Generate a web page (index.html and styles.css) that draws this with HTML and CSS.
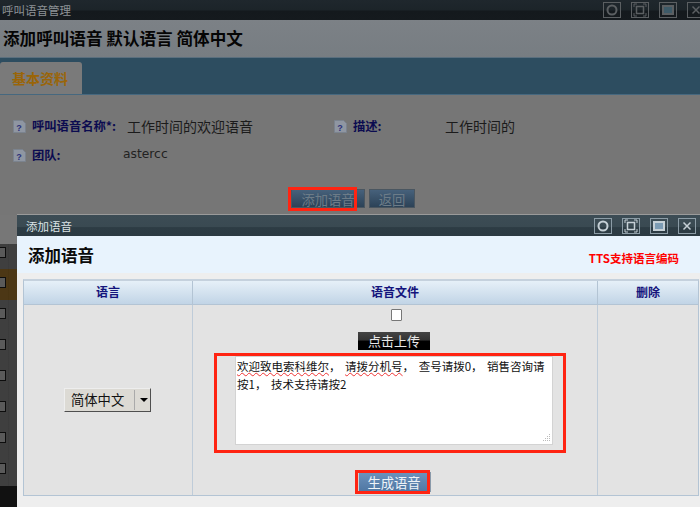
FILE: index.html
```html
<!DOCTYPE html>
<html lang="zh">
<head>
<meta charset="utf-8">
<title>呼叫语音管理</title>
<link rel="stylesheet" href="styles.css">
</head>
<body>
<div class="desk">
  <section class="win">
    <header class="win-bar">
      <span class="win-title">呼叫语音管理</span>
      <div class="win-tools dim">
        <svg class="tool" viewBox="0 0 18 16"><rect x=".5" y=".5" width="17" height="15" fill="none" stroke="currentColor"/><circle cx="9" cy="8" r="4.500" fill="none" stroke="currentColor" stroke-width="2"/></svg>
        <svg class="tool" viewBox="0 0 18 16"><rect x=".5" y=".5" width="17" height="15" fill="none" stroke="currentColor"/><rect x="5.500" y="4.500" width="7" height="7" fill="none" stroke="currentColor" stroke-width="1.500"/><path d="M3 5V2h3M12 2h3v3M15 11v3h-3M6 14H3v-3" fill="none" stroke="currentColor"/></svg>
        <svg class="tool" viewBox="0 0 18 16"><rect x=".5" y=".5" width="17" height="15" fill="none" stroke="currentColor"/><rect x="4" y="4" width="10" height="8" fill="#3d5a68" stroke="currentColor" stroke-width="2"/></svg>
        <svg class="tool" viewBox="0 0 18 16"><rect x=".5" y=".5" width="17" height="15" fill="none" stroke="currentColor"/><path d="M5.500 4.500l7 7M12.500 4.500l-7 7" stroke="currentColor" stroke-width="1.500"/></svg>
      </div>
    </header>
    <h1 class="page-head">添加呼叫语音 默认语言 简体中文</h1>
    <nav class="tabs"><span class="tab">基本资料</span></nav>
    <div class="form">
      <div class="form-row">
        <span class="field field-name">
          <svg class="help" viewBox="0 0 13 13"><path d="M.5.5h9l3 3v9H.5z" fill="#8f96a2" stroke="#7b838e"/><text x="6" y="10.500" class="help-q">?</text></svg>
          <b class="lbl lbl-name">呼叫语音名称*:</b><span class="val">工作时间的欢迎语音</span>
        </span>
        <span class="field field-desc">
          <svg class="help" viewBox="0 0 13 13"><path d="M.5.5h9l3 3v9H.5z" fill="#8f96a2" stroke="#7b838e"/><text x="6" y="10.500" class="help-q">?</text></svg>
          <b class="lbl lbl-desc">描述:</b><span class="val">工作时间的</span>
        </span>
      </div>
      <div class="form-row row-team">
        <span class="field">
          <svg class="help" viewBox="0 0 13 13"><path d="M.5.5h9l3 3v9H.5z" fill="#8f96a2" stroke="#7b838e"/><text x="6" y="10.500" class="help-q">?</text></svg>
          <b class="lbl lbl-team">团队:</b><span class="val val-latin">astercc</span>
        </span>
      </div>
      <div class="actions">
        <span class="marked marked-add"><button class="btn btn-dim btn-add">添加语音</button></span>
        <button class="btn btn-dim btn-back">返回</button>
      </div>
    </div>
    <div class="under-list">
      <div class="under-row under-first"><i class="under-box"></i></div>
      <div class="under-row under-hot"><i class="under-box"></i></div>
      <div class="under-row"><i class="under-box"></i></div>
      <div class="under-row"><i class="under-box"></i></div>
      <div class="under-row"><i class="under-box"></i></div>
      <div class="under-row"><i class="under-box"></i></div>
      <div class="under-row"><i class="under-box"></i></div>
      <div class="under-row"><i class="under-box"></i></div>
    </div>
  </section>

  <section class="dialog">
    <header class="dlg-bar">
      <span class="dlg-title">添加语音</span>
      <div class="win-tools">
        <svg class="tool" viewBox="0 0 18 16"><rect x=".5" y=".5" width="17" height="15" fill="none" stroke="#8c9ca6"/><circle cx="9" cy="8" r="4.500" fill="none" stroke="currentColor" stroke-width="2"/></svg>
        <svg class="tool" viewBox="0 0 18 16"><rect x=".5" y=".5" width="17" height="15" fill="none" stroke="#8c9ca6"/><rect x="5.500" y="4.500" width="7" height="7" fill="none" stroke="currentColor" stroke-width="1.500"/><path d="M3 5V2h3M12 2h3v3M15 11v3h-3M6 14H3v-3" fill="none" stroke="currentColor"/></svg>
        <svg class="tool" viewBox="0 0 18 16"><rect x=".5" y=".5" width="17" height="15" fill="none" stroke="#8c9ca6"/><rect x="4" y="4" width="10" height="8" fill="#7d9cb4" stroke="currentColor" stroke-width="2"/></svg>
        <svg class="tool" viewBox="0 0 18 16"><rect x=".5" y=".5" width="17" height="15" fill="none" stroke="#8c9ca6"/><path d="M5.500 4.500l7 7M12.500 4.500l-7 7" stroke="currentColor" stroke-width="1.500"/></svg>
      </div>
    </header>
    <div class="dlg-head">
      <h2 class="dlg-heading">添加语音</h2>
      <span class="tts-note">TTS支持语言编码</span>
    </div>
    <div class="dlg-body">
      <div class="grid">
        <div class="th">语言</div>
        <div class="th">语音文件</div>
        <div class="th">删除</div>
        <div class="td td-lang">
          <span class="select"><span class="select-text">简体中文</span><span class="select-arrow"></span></span>
        </div>
        <div class="td td-file">
          <input class="check" type="checkbox">
          <button class="upload">点击上传</button>
          <div class="marked marked-text">
            <div class="textarea"><span class="spell">欢迎致电索科维尔</span>， <span class="spell">请拨分机号</span>， 查号请拨0， 销售咨询请按1， 技术支持请按2<svg class="grip" viewBox="0 0 10 10"><path d="M8 1h1v1H8zM6 3h1v1H6zM8 3h1v1H8zM4 5h1v1H4zM6 5h1v1H6zM8 5h1v1H8zM2 7h1v1H2zM4 7h1v1H4zM6 7h1v1H6zM8 7h1v1H8z" fill="#bbb"/></svg></div>
          </div>
          <span class="marked marked-gen"><button class="btn btn-gen">生成语音</button></span>
        </div>
        <div class="td"></div>
      </div>
    </div>
  </section>
</div>
</body>
</html>
```

FILE: styles.css
```css
*, *::after { box-sizing: border-box; }
html, body { margin: 0; padding: 0; }
body { width: 700px; height: 507px; overflow: hidden; background: #777; font-family: "Noto Sans CJK SC", "Liberation Sans", sans-serif; }
.desk { position: relative; width: 700px; height: 507px; overflow: hidden; }

/* background window, dimmed */
.win { display: flex; flex-direction: column; height: 507px; background: #777; }
.win-bar { display: flex; align-items: center; justify-content: space-between; height: 20px; flex: none; background: linear-gradient(#1f272d 0, #1c2429 50%, #14191d 55%, #151a1e 100%); }
.win-title { font-size: 11.500px; line-height: 20px; color: #8d9296; padding-left: 2px; }
.win-tools { display: flex; gap: 10px; color: #c6d0d6; }
.win-tools.dim { color: #5b5f62; margin-right: -5px; }
.tool { width: 18px; height: 16px; display: block; }
.page-head { margin: 0; height: 38px; flex: none; padding-left: 3px; font-size: 16.600px; line-height: 37px; font-weight: 700; color: #050505; background: linear-gradient(#7c8186, #777d82); border-bottom: 1px solid #5a6f7e; white-space: nowrap; }
.tabs { display: flex; align-items: flex-end; height: 37px; flex: none; background: #2d4d60; border-bottom: 1px solid #46687f; }
.tab { display: block; width: 82px; height: 32px; padding-left: 12px; font-size: 14px; line-height: 32px; font-weight: 700; color: #9a6508; background: #7a7a7a; border-radius: 3px 3px 0 0; }
.form { height: 120px; flex: none; padding-top: 18px; background: #767676; }
.form-row { display: flex; height: 26px; align-items: center; }
.row-team { margin-top: 3px; }
.field { display: flex; align-items: center; }
.field-name { width: 321px; }
.help { width: 13px; height: 13px; margin-left: 13px; flex: none; }
.help-q { font: 700 9px "Liberation Sans", sans-serif; fill: #2b2f7a; text-anchor: middle; }
.lbl { font-size: 12.300px; color: #0b0b50; margin-left: 6px; white-space: nowrap; }
.lbl-name { width: 90px; }
.lbl-desc { width: 87px; }
.lbl-team { width: 91px; }
.val { font-size: 14px; color: #1b1b1b; margin-left: 5px; white-space: nowrap; }
.val-latin { font-family: "DejaVu Sans", sans-serif; font-size: 12.300px; margin-top: -2px; margin-left: 0; color: #222; }
.actions { display: flex; justify-content: center; gap: 4px; margin-top: 21px; padding-left: 6px; }
.marked { position: relative; display: block; }
.marked::after { content: ""; position: absolute; border: 3px solid #ff2412; pointer-events: none; }
.marked-add::after { left: -3px; top: -2px; width: 69px; height: 24px; }
.marked-text { width: 318px; height: 89px; margin-top: 6px; flex: none; }
.marked-text::after { left: -21px; top: -3px; width: 352px; height: 100px; }
.marked-gen { margin-top: 27px; }
.marked-gen::after { left: -3px; top: -2px; width: 75px; height: 24px; }
.btn { display: block; font: 13.300px/19px "Noto Sans CJK SC", sans-serif; height: 19px; padding: 0; border: 1px solid #4a5660; color: #6d7c88; }
.btn-dim { background: linear-gradient(#46617b, #2c4257); }
.btn-add { width: 74px; }
.btn-back { width: 46px; }
.under-list { position: absolute; left: 0; top: 244px; width: 17px; height: 263px; display: flex; flex-direction: column; background: #111; }
.under-row { height: 31px; padding-top: 8px; background: linear-gradient(90deg, #3f3f3f 8px, #383838 8px, #3f3f3f 9px); }
.under-first { height: 25px; padding-top: 3px; }
.under-hot { background: linear-gradient(90deg, #4c3715 8px, #45320f 8px, #4c3715 9px); }
.under-box { display: block; width: 6px; height: 11px; border: 1px solid #0d0d0d; border-left: 0; background: #5a5a5a; }

/* dialog */
.dialog { position: absolute; left: 17px; top: 214px; width: 683px; height: 293px; background: #eee; border-top: 1px solid #9a9a9a; }
.dlg-bar { display: flex; align-items: center; justify-content: space-between; height: 21px; padding-right: 4px; background: linear-gradient(#3c4c55 0, #3a4a52 55%, #2d3c44 60%, #2c3a42 100%); }
.dlg-title { font-size: 11.500px; color: #dce3e6; padding-left: 9px; }
.dlg-head { display: flex; justify-content: space-between; align-items: center; height: 37px; background: #e8f3fd; padding: 0 20px 0 11px; }
.dlg-heading { margin: 0; font-size: 16.500px; line-height: 38px; font-weight: 700; color: #0a0a0a; }
.tts-note { font-size: 11.500px; font-weight: 700; color: #f00; margin-top: 6px; margin-right: 1px; white-space: nowrap; }
.dlg-body { padding: 6px 2px 0 6px; }
.grid { display: grid; grid-template-columns: 169px 405px 100px; grid-template-rows: 24px 190px; width: 676px; border: 1px solid #b3c4d4; border-top-width: 2px; border-top-color: #c5d1dd; }
.th { display: flex; align-items: center; justify-content: center; padding-bottom: 2px; font-size: 12px; font-weight: 700; color: #14147c; background: linear-gradient(#e6f0f8, #c1d4e6); border-right: 1px solid #b3c4d4; border-bottom: 1px solid #b3c4d4; }
.td { background: #e3e3e3; border-right: 1px solid #bfccd9; }
.th:nth-child(3), .td:last-child { border-right: 0; }
.td-lang { display: flex; align-items: center; justify-content: center; padding-right: 1px; }
.select { display: flex; align-items: center; width: 87px; height: 24px; background: #dcdad4; border: 1px solid; border-color: #eee #4f4f4f #4f4f4f #eee; }
.select-text { width: 70px; font-size: 13.300px; color: #111; padding-left: 6px; white-space: nowrap; border-right: 1px solid #aaa; line-height: 20px; }
.select-arrow { width: 0; height: 0; margin-left: 5px; border: 4px solid transparent; border-top: 4px solid #000; border-bottom: 0; }
.td-file { display: flex; flex-direction: column; align-items: center; padding-right: 2px; }
.check { width: 11px; height: 12px; margin: 4px 0 0 5px; flex: none; appearance: none; background: #fff; border: 1px solid #777; border-radius: 1px; }
.upload { width: 72px; height: 18px; margin-top: 11px; flex: none; padding: 0; border: 0; font: 13px/18px "Noto Sans CJK SC", sans-serif; color: #e8e8e8; background: linear-gradient(#444 0, #333 45%, #000 50%, #000); }
.textarea { position: relative; width: 100%; height: 100%; padding: 0 1px; background: #fff; border: 1px solid #d3d3d3; font-size: 11.500px; word-spacing: 2px; line-height: 18px; color: #111; }
.spell { text-decoration: underline wavy #e33 1px; }
.grip { position: absolute; right: 1px; bottom: 1px; width: 10px; height: 10px; }
.btn-gen { width: 73px; height: 20px; border: 0; border-left: 1px solid #d0d0d0; border-right: 1px solid #8a9aaa; color: #eef3f8; background: linear-gradient(#6c93bd, #4e76a2); }
```
